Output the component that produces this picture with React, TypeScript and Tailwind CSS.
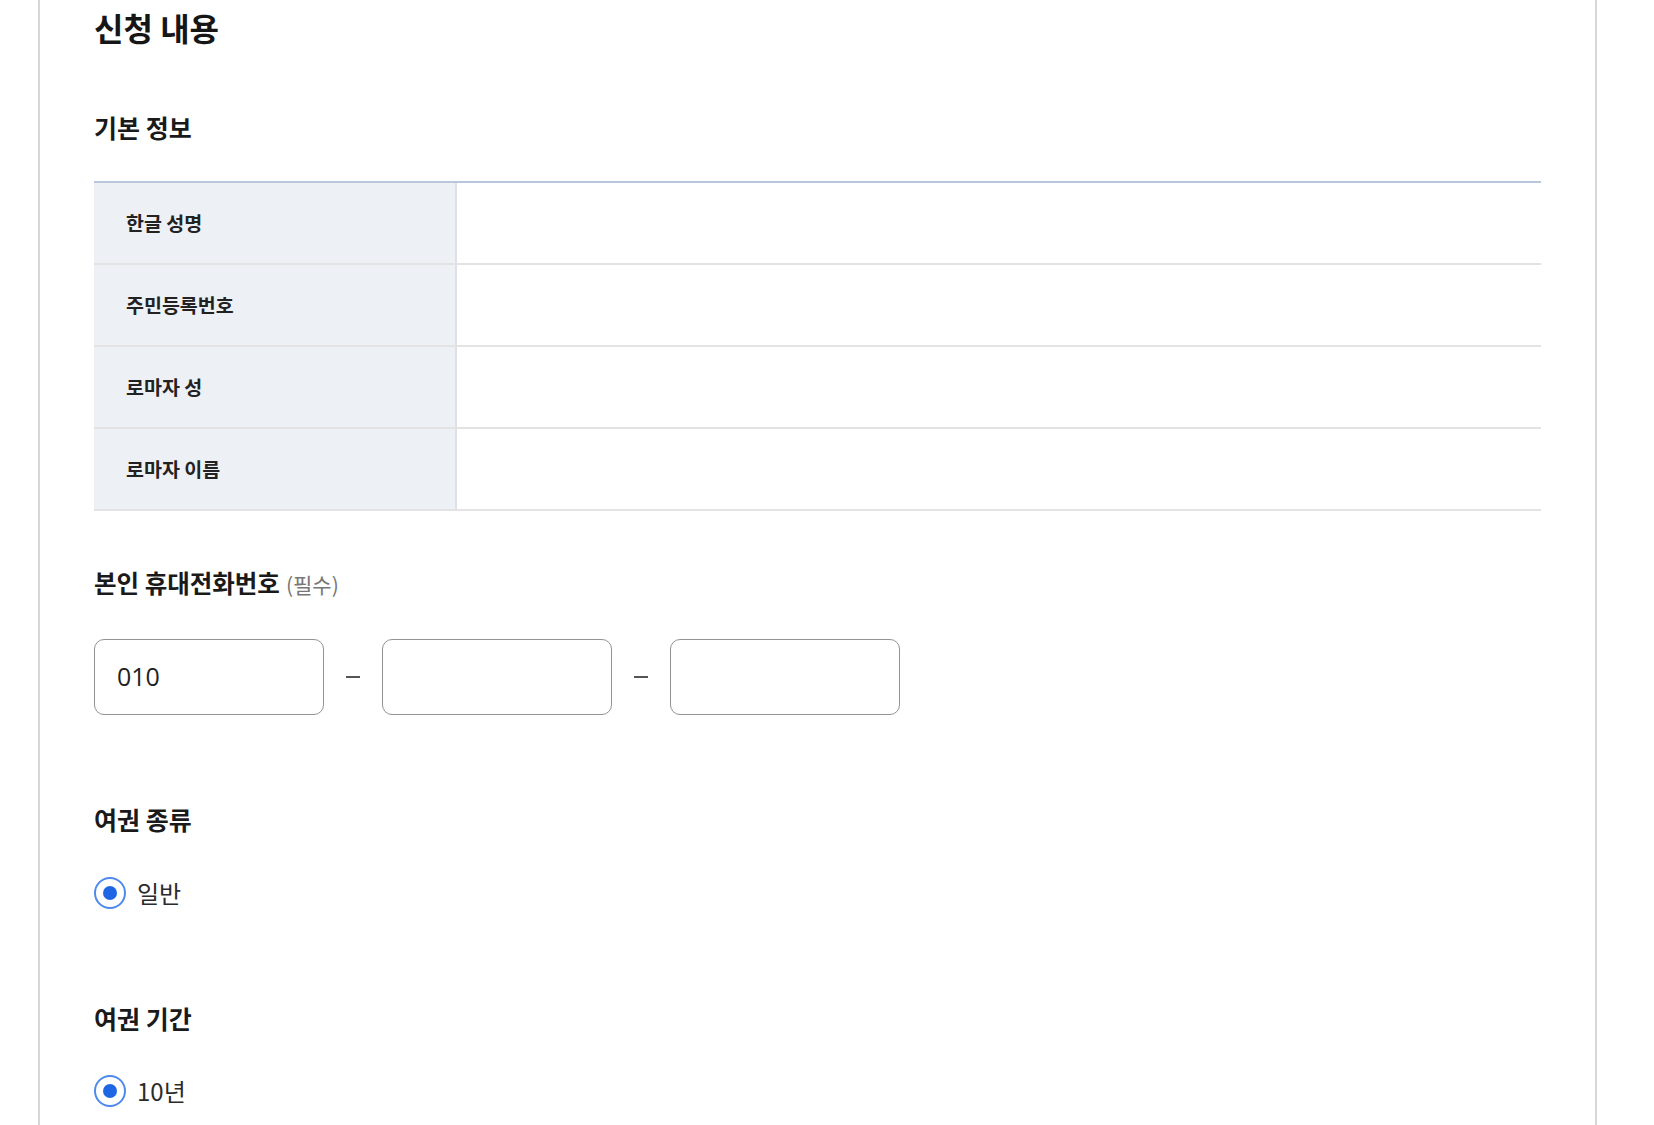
const font = { fontFamily: '"Noto Sans CJK KR", "Noto Sans", sans-serif' };

const rows = ["한글 성명", "주민등록번호", "로마자 성", "로마자 이름"];

function Radio({ label }: { label: string }) {
  return (
    <label className="flex h-[32px] items-center gap-[11px]">
      <span className="flex h-[32px] w-[32px] items-center justify-center rounded-full border-2 border-[#4f89ee] bg-white">
        <span className="h-[14px] w-[14px] rounded-full bg-[#1f66e5]" />
      </span>
      <span className="text-[24px] leading-[32px] text-[#2b2b2b]">{label}</span>
    </label>
  );
}

function PhoneInput({ value }: { value?: string }) {
  return (
    <div className="flex h-[76px] w-[230px] items-center rounded-[10px] border-[1.5px] border-[#939393] bg-white px-[22px]">
      <span className="text-[25px] text-[#222]" style={{ fontFamily: '"Open Sans", "Noto Sans", sans-serif' }}>
        {value}
      </span>
    </div>
  );
}

function Dash() {
  return <span className="mx-[22px] h-[2px] w-[14px] bg-[#555]" />;
}

export default function App() {
  return (
    <div className="min-h-screen bg-white" style={font}>
      <div className="ml-[38px] min-h-[1125px] w-[1559px] border-x-2 border-[#d7d7d7] px-[54px] pt-[7px]">
        <h1 className="text-[32px] font-bold leading-[40px] text-[#161616]">신청 내용</h1>

        <h2 className="mt-[64px] text-[25px] font-bold leading-[32px] text-[#1a1a1a]">기본 정보</h2>

        <div className="mt-[38px] border-t-2 border-[#b9c7dc]">
          {rows.map((row) => (
            <div key={row} className="grid grid-cols-[363px_1fr] border-b-2 border-[#e3e3e3]">
              <div className="flex h-[80px] items-center border-r-2 border-[#dde1e7] bg-[#edf0f5] pl-[32px]">
                <span className="text-[19.5px] font-bold text-[#222]">{row}</span>
              </div>
              <div className="h-[80px] bg-white" />
            </div>
          ))}
        </div>

        <div className="mt-[56px] flex items-baseline gap-[6px] leading-[32px]">
          <span className="text-[24.5px] font-bold text-[#1a1a1a]">본인 휴대전화번호</span>
          <span className="text-[21px] text-[#777]">(필수)</span>
        </div>

        <div className="mt-[39px] flex items-center">
          <PhoneInput value="010" />
          <Dash />
          <PhoneInput />
          <Dash />
          <PhoneInput />
        </div>

        <h2 className="mt-[88px] text-[25px] font-bold leading-[32px] text-[#1a1a1a]">여권 종류</h2>
        <div className="mt-[42px]">
          <Radio label="일반" />
        </div>

        <h2 className="mt-[93px] text-[25px] font-bold leading-[32px] text-[#1a1a1a]">여권 기간</h2>
        <div className="mt-[41px]">
          <Radio label="10년" />
        </div>
      </div>
    </div>
  );
}
